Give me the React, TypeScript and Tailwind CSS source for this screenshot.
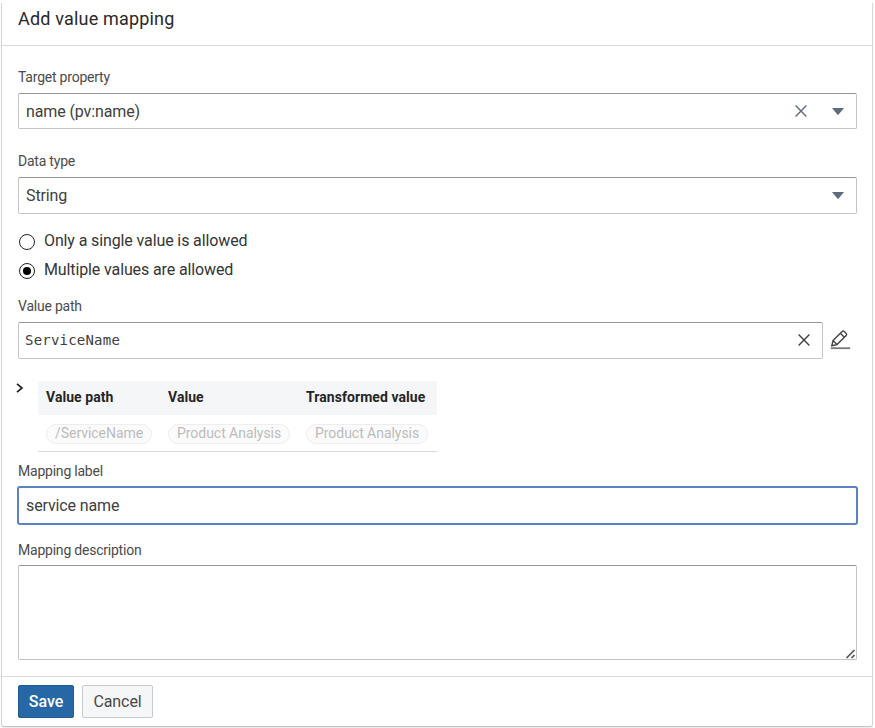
import React from "react";

const Caret = () => (
  <svg className="block h-[7px] w-[12px] fill-[#5f6b7c]" viewBox="0 0 12 7">
    <path d="M0 0h12L6.6 6.6a.85.85 0 0 1-1.2 0z" />
  </svg>
);

const Cross = ({ className }: { className: string }) => (
  <svg className={`block h-[12px] w-[12px] ${className}`} viewBox="0 0 12 12" fill="none">
    <path d="M.6.6l10.8 10.8M11.4.6L.6 11.4" strokeWidth="1.4" />
  </svg>
);

const Label = ({ children }: { children: React.ReactNode }) => (
  <div className="h-[18px] text-[14px] leading-[18px] tracking-[-0.22px] whitespace-nowrap text-[#4b4b4b]">{children}</div>
);

const field =
  "flex items-center rounded-[2px] border border-[#c4c4c4] border-t-[#959595] bg-white pl-[7px] text-[16px] tracking-[-0.12px] text-[#404040]";

const Radio = ({ checked, children }: { checked?: boolean; children: React.ReactNode }) => (
  <div className="flex h-[29px] text-[16px] leading-[20px] tracking-[-0.12px] text-[#353535]">
    <span className="mt-[3px] mr-[9px] ml-px flex h-[16px] w-[16px] shrink-0 items-center justify-center rounded-full border-[1.5px] border-[#222]">
      {checked && <span className="h-[8px] w-[8px] rounded-full bg-black" />}
    </span>
    {children}
  </div>
);

const Tag = ({ children }: { children: React.ReactNode }) => (
  <span className="flex h-[20px] w-fit items-start rounded-full border border-[#eeeeee] bg-[#fbfbfb] px-[8px] text-[14px] leading-[16px] tracking-[-0.04px] whitespace-nowrap text-[#bcbcbc]">
    {children}
  </span>
);

const columns = [
  { title: "Value path", value: "/ServiceName" },
  { title: "Value", value: "Product Analysis" },
  { title: "Transformed value", value: "Product Analysis" },
];

export default function App() {
  return (
    <div className="h-[728px] w-[875px] overflow-hidden bg-white pt-[3px] pl-px font-['Roboto',sans-serif]">
      <section className="h-[724px] w-[872px] rounded-b-[3px] border border-t-0 border-[#d5d5d5] border-b-[#c4c4c4] shadow-[0_1px_1px_rgba(0,0,0,0.08)]">
        <header className="h-[43px] border-b border-[#d9d9d9] pt-[4px] pl-[16px] text-[18px] leading-[24px] tracking-[0.18px] text-[#282828]">
          Add value mapping
        </header>

        <div className="h-[630px] px-[16px] pt-[22px]">
          <Label>Target property</Label>
          <div className={`${field} mt-[7px] h-[36px] w-[839px]`}>
            <span className="grow pt-px">name (pv:name)</span>
            <Cross className="mr-[25px] stroke-[#5f6b7c]" />
            <span className="mr-[12px]"><Caret /></span>
          </div>

          <div className="mt-[23px]"><Label>Data type</Label></div>
          <div className={`${field} mt-[7px] h-[37px] w-[839px]`}>
            <span className="grow">String</span>
            <span className="mr-[12px]"><Caret /></span>
          </div>

          <div className="mt-[17px] h-[66px]">
            <Radio>Only a single value is allowed</Radio>
            <Radio checked>Multiple values are allowed</Radio>
          </div>

          <Label>Value path</Label>
          <div className="mt-[7px] flex h-[37px]">
            <div className={`${field} h-[37px] w-[805px]`}>
              <span className="-ml-px grow font-['DejaVu_Sans_Mono',monospace] text-[14px] tracking-[0.21px]">ServiceName</span>
              <Cross className="mr-[12px] mb-px stroke-[#404040]" />
            </div>
            <svg className="mt-[7px] ml-[7px] h-[22px] w-[22px]" viewBox="0 0 22 22" fill="none" stroke="#444" strokeWidth="1.4">
              <path d="M3 11.6 12.2 2.4q1-1 2 0l2 2q1 1 0 2L7 15.6l-5.2 1.2zM10.4 4.3l3.9 3.9M3 11.6 7 15.6" />
              <path d="M.8 19.2h19.4" stroke="#777" strokeWidth="1.8" />
            </svg>
          </div>

          <div className="mt-[22px] flex h-[81px]">
            <svg className="mt-[2px] mr-[14px] -ml-[2px] h-[10px] w-[8px]" viewBox="0 0 8 10" fill="none" stroke="#222" strokeWidth="1.7">
              <path d="M1 .8 6 5 1 9.2" />
            </svg>
            <div className="h-[71px] w-[399px] border-b border-[#d8d8d8]">
              <div className="grid h-[34px] grid-cols-[122px_138px_1fr] items-center bg-[#f5f6f8] pl-[8px] text-[14px] font-bold tracking-[0.06px] text-[#252525]">
                {columns.map((c) => <span key={c.title} className="-mt-px">{c.title}</span>)}
              </div>
              <div className="grid grid-cols-[122px_138px_1fr] pt-[9px] pl-[8px]">
                {columns.map((c) => <Tag key={c.title}>{c.value}</Tag>)}
              </div>
            </div>
          </div>

          <Label>Mapping label</Label>
          <div className="mt-[6px] -ml-px flex h-[39px] w-[841px] items-center rounded-[3px] border-2 border-[#5b82c4] bg-white pl-[7px] text-[16px] tracking-[-0.12px] text-[#404040]">
            service name
          </div>

          <div className="mt-[16px]"><Label>Mapping description</Label></div>
          <div className="mt-[6px] flex h-[95px] w-[839px] items-end justify-end rounded-[2px] border border-[#c4c4c4] border-t-[#959595]">
            <svg className="h-[11px] w-[11px]" viewBox="0 0 11 11" stroke="#555" strokeWidth="1.7">
              <path d="M1.5 10 9.5 2M6.5 10 9.5 7" />
            </svg>
          </div>
        </div>

        <footer className="flex h-[50px] gap-[8px] border-t border-[#d9d9d9] pt-[8px] pl-[16px] text-[16px] tracking-[-0.08px]">
          <button className="h-[33px] w-[56px] rounded-[2px] border border-[#1f5a94] bg-[#2667a5] font-medium text-white">Save</button>
          <button className="h-[33px] w-[71px] rounded-[2px] border border-[#c8cacd] bg-[#f5f6f8] text-[#484848]">Cancel</button>
        </footer>
      </section>
    </div>
  );
}
